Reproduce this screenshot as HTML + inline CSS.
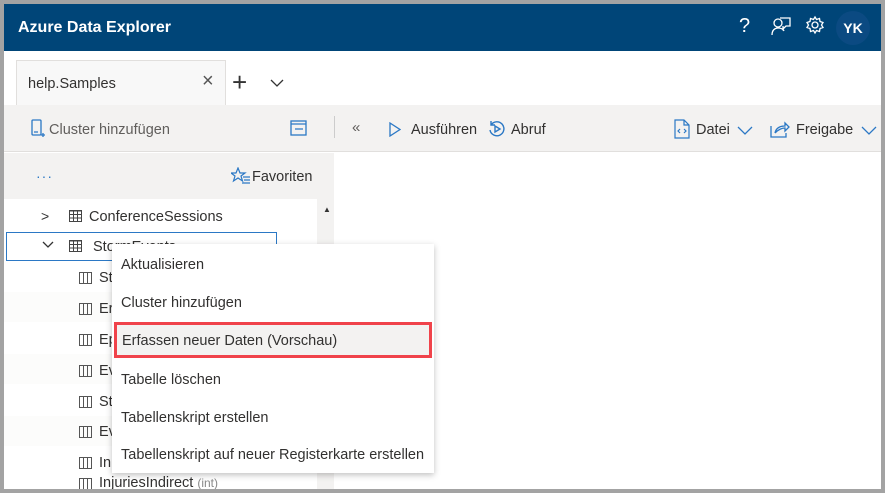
<!DOCTYPE html>
<html><head><style>
*{margin:0;padding:0;box-sizing:border-box}
body{width:885px;height:493px;background:#a3a3a3;position:relative;overflow:hidden;font-family:"Liberation Sans",sans-serif;color:#323130}
.a{position:absolute}
.t{font-size:14.5px;white-space:nowrap}
.c{width:13px;height:12px;border:1px solid #555;background:repeating-linear-gradient(90deg,transparent 0 3px,#555 3px 4px)}
</style></head><body>
<div class="a" style="left:4px;top:4px;width:877px;height:485px;background:#fff;overflow:hidden">
 <div class="a" style="left:0;top:0;width:877px;height:47px;background:#004578"></div>
 <div class="a t" style="left:14px;top:15px;color:#fff;font-weight:bold;font-size:16px">Azure Data Explorer</div>
 <div class="a" style="left:735px;top:11px;color:#fff;font-size:20px">?</div>
 <svg class="a" style="left:766px;top:11px" width="22" height="22" viewBox="0 0 22 22" fill="none" stroke="#fff" stroke-width="1.3"><circle cx="8" cy="8" r="4"/><path d="M2 20c0-5 3-7 6-7s5 1 6 3M10 3h10v8h-4l-3 3v-3"/></svg>
 <svg class="a" style="left:801px;top:11px" width="20" height="20" viewBox="0 0 20 20" fill="none" stroke="#fff" stroke-width="1.3"><circle cx="10" cy="10" r="3"/><path d="M10 2l1.5 2.5 3-1 .5 3 3 1-1.5 2.5 1.5 2.5-3 1-.5 3-3-1L10 18l-1.5-2.5-3 1-.5-3-3-1L3.5 10 2 7.5l3-1 .5-3 3 1z"/></svg>
 <div class="a" style="left:832px;top:7px;width:34px;height:34px;border-radius:50%;background:#0b4a82;color:#fff;font-weight:bold;font-size:14px;text-align:center;line-height:34px">YK</div>

 <div class="a" style="left:12px;top:56px;width:210px;height:50px;background:#f8f8f8;border:1px solid #e1dfdd;border-bottom:none"></div>
 <div class="a t" style="left:24px;top:72px">help.Samples</div>
 <div class="a" style="left:198px;top:66px;font-size:20px;color:#555">×</div>
 <div class="a" style="left:228px;top:63px;font-size:26px;color:#333;font-weight:300">+</div>
 <svg class="a" style="left:266px;top:74px" width="14" height="10"><path d="M1 2l6 6 6-6" stroke="#333" fill="none" stroke-width="1.3"/></svg>

 <div class="a" style="left:0;top:101px;width:877px;height:47px;background:#f3f2f1;border-bottom:1px solid #e1dfdd"></div>
 <svg class="a" style="left:27px;top:115px" width="14" height="20" fill="none" stroke="#2b78c5" stroke-width="1.3"><rect x="1" y="1" width="9" height="15" rx="1"/><path d="M3 13h4M10 16h4M12 14v4"/></svg>
 <div class="a t" style="left:45px;top:118px;color:#605e5c">Cluster hinzufügen</div>
 <svg class="a" style="left:286px;top:115px" width="18" height="18" fill="none" stroke="#2b78c5" stroke-width="1.3"><rect x="1" y="2" width="15" height="14"/><path d="M1 5h15M5 10h8"/></svg>
 <div class="a" style="left:330px;top:112px;width:1px;height:22px;background:#ccc"></div>
 <div class="a" style="left:348px;top:115px;color:#605e5c;font-size:15px">«</div>
 <svg class="a" style="left:385px;top:118px" width="12" height="15" fill="none" stroke="#2b78c5" stroke-width="1.3"><path d="M1 1l10 6.5L1 14z"/></svg>
 <div class="a t" style="left:407px;top:118px;color:#323130">Ausführen</div>
 <svg class="a" style="left:484px;top:116px" width="18" height="18" fill="none" stroke="#2b78c5" stroke-width="1.4"><path d="M3 5a7 7 0 1 1-1 5M3 1v4h4"/><path d="M7 6l5 3-5 3z"/></svg>
 <div class="a t" style="left:507px;top:118px">Abruf</div>
 <svg class="a" style="left:670px;top:115px" width="16" height="20" fill="none" stroke="#2b78c5" stroke-width="1.2"><path d="M1 1h9l5 5v13H1zM10 1v5h5M6 10l-2 2 2 2M10 10l2 2-2 2"/></svg>
 <div class="a t" style="left:692px;top:118px">Datei</div>
 <svg class="a" style="left:733px;top:122px" width="16" height="10"><path d="M1 1l7 7 7-7" stroke="#2b78c5" fill="none" stroke-width="1.3"/></svg>
 <svg class="a" style="left:766px;top:116px" width="20" height="18" fill="none" stroke="#2b78c5" stroke-width="1.3"><path d="M1 6v11h15v-4M5 13c1-5 5-7 10-7V3l4 4-4 4V8c-4 0-7 2-10 5"/></svg>
 <div class="a t" style="left:792px;top:118px">Freigabe</div>
 <svg class="a" style="left:857px;top:122px" width="16" height="10"><path d="M1 1l7 7 7-7" stroke="#2b78c5" fill="none" stroke-width="1.3"/></svg>

 <div class="a" style="left:0;top:149px;width:330px;height:336px;background:#f3f2f1"></div>
 <div class="a" style="left:32px;top:164px;color:#2b78c5;font-size:14px;letter-spacing:1px">···</div>
 <svg class="a" style="left:227px;top:163px" width="20" height="18" fill="none" stroke="#2b78c5" stroke-width="1.2"><path d="M7 1l2 5h5l-4 3 1.5 5L7 11l-4.5 3L4 9 0 6h5zM12 10h7M13 13h6M11 16h8"/></svg>
 <div class="a t" style="left:248px;top:165px">Favoriten</div>
 <div class="a" style="left:0;top:195px;width:313px;height:290px;background:#fff"></div>
 <div class="a" style="left:0;top:288px;width:313px;height:30px;background:#fcfcfb"></div>
 <div class="a" style="left:0;top:350px;width:313px;height:30px;background:#fcfcfb"></div>
 <div class="a" style="left:0;top:412px;width:313px;height:30px;background:#fcfcfb"></div>
 <div class="a" style="left:319px;top:201px;font-size:8px;color:#333">▲</div>
 <div class="a" style="left:37px;top:204px;font-size:14px;color:#333">&gt;</div>
 <div class="a" style="left:2px;top:228px;width:271px;height:29px;border:1px solid #2b78c5"></div>
 <svg class="a" style="left:38px;top:237px" width="12" height="8"><path d="M1 1l5 5 5-5" stroke="#333" fill="none" stroke-width="1.3"/></svg>
 <div class="a" style="left:65px;top:206px;width:13px;height:12px;border:1.5px solid #444;background:repeating-linear-gradient(90deg,transparent 0 3px,#444 3px 4px),repeating-linear-gradient(0deg,transparent 0 2.5px,#444 2.5px 3.5px)"></div>
 <div class="a t" style="left:85px;top:205px">ConferenceSessions</div>
 <div class="a" style="left:65px;top:236px;width:13px;height:12px;border:1.5px solid #444;background:repeating-linear-gradient(90deg,transparent 0 3px,#444 3px 4px),repeating-linear-gradient(0deg,transparent 0 2.5px,#444 2.5px 3.5px)"></div>
 <div class="a t" style="left:89px;top:235px">StormEvents</div>
 <div class="a c" style="left:75px;top:268px"></div><div class="a t" style="left:95px;top:266px">St</div>
 <div class="a c" style="left:75px;top:299px"></div><div class="a t" style="left:95px;top:297px">Er</div>
 <div class="a c" style="left:75px;top:330px"></div><div class="a t" style="left:95px;top:328px">Ep</div>
 <div class="a c" style="left:75px;top:361px"></div><div class="a t" style="left:95px;top:359px">Ev</div>
 <div class="a c" style="left:75px;top:392px"></div><div class="a t" style="left:95px;top:390px">St</div>
 <div class="a c" style="left:75px;top:422px"></div><div class="a t" style="left:95px;top:420px">Ev</div>
 <div class="a c" style="left:75px;top:453px"></div><div class="a t" style="left:95px;top:451px">In</div>
 <div class="a c" style="left:75px;top:474px"></div><div class="a t" style="left:95px;top:471px">InjuriesIndirect <span style="font-size:12px;color:#888">(int)</span></div>

 <div class="a" style="left:108px;top:240px;width:322px;height:229px;background:#fff;box-shadow:0 2px 6px rgba(0,0,0,.25)"></div>
 <div class="a t" style="left:117px;top:253px">Aktualisieren</div>
 <div class="a t" style="left:117px;top:291px">Cluster hinzufügen</div>
 <div class="a" style="left:110px;top:318px;width:318px;height:36px;background:#f3f2f1;border:3px solid #f0434b"></div>
 <div class="a t" style="left:118px;top:329px">Erfassen neuer Daten (Vorschau)</div>
 <div class="a t" style="left:117px;top:368px">Tabelle löschen</div>
 <div class="a t" style="left:117px;top:406px">Tabellenskript erstellen</div>
 <div class="a t" style="left:117px;top:443px">Tabellenskript auf neuer Registerkarte erstellen</div>
</div>
</body></html>
